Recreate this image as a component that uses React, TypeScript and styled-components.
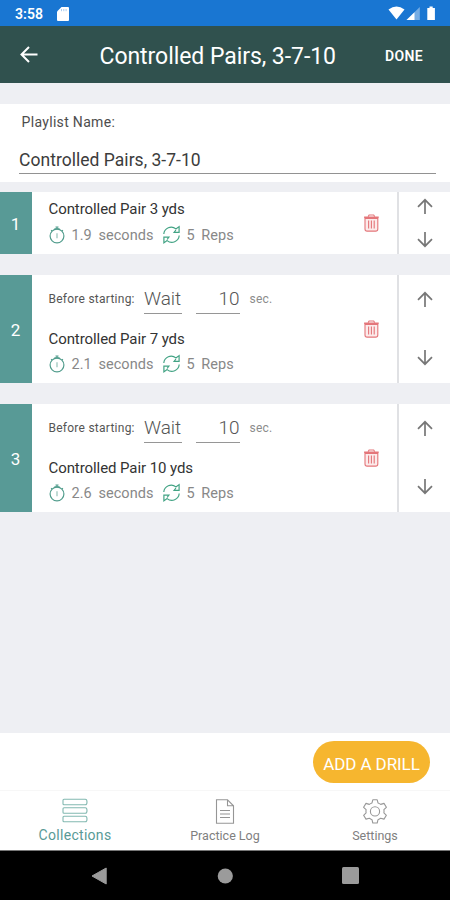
import React from "react";
import styled, { createGlobalStyle } from "styled-components";

const GlobalStyle = createGlobalStyle`
  * { box-sizing: border-box; }
  body { margin: 0; background: #eeeff3; }
  svg { display: block; flex: none; }
`;

const Screen = styled.div`
  width: 450px;
  height: 900px;
  display: flex;
  flex-direction: column;
  overflow: hidden;
  background: #eeeff3;
  font-family: Roboto, "Liberation Sans", sans-serif;
  color: #424242;
  white-space: nowrap;
`;

const StatusBar = styled.div`
  height: 26px;
  display: flex;
  align-items: center;
  padding: 1px 14px 0 15px;
  background: #1976d2;
  color: #fff;
`;

const Clock = styled.span`
  width: 42px;
  font-size: 14px;
  font-weight: 600;
  letter-spacing: 0.1px;
`;

const StatusIcons = styled.div`
  margin-left: auto;
  display: flex;
  align-items: center;
`;

const Header = styled.header`
  height: 57px;
  display: flex;
  align-items: center;
  padding: 2px 25px 0 20px;
  background: #30514e;
  color: #fff;
`;

const Title = styled.h1`
  margin: 0 0 0 61.5px;
  width: 285.5px;
  padding-top: 2px;
  font-size: 23px;
  font-weight: 400;
  line-height: 30px;
  letter-spacing: -0.06px;
`;

const Done = styled.button`
  padding: 0;
  border: 0;
  background: none;
  color: #fff;
  font: 600 14px/20px Roboto, sans-serif;
  letter-spacing: 0.35px;
`;

const NamePanel = styled.section`
  height: 78px;
  margin-top: 21px;
  padding: 8px 14px 0 19px;
  background: #fff;
`;

const FieldLabel = styled.div`
  padding-left: 2.5px;
  font-size: 14px;
  line-height: 20px;
  letter-spacing: 0.32px;
  color: #4d4d4d;
`;

const NameField = styled.div`
  height: 42px;
  padding-top: 17px;
  border-bottom: 1px solid #929292;
  font-size: 17.5px;
  line-height: 22px;
  letter-spacing: 0.03px;
  color: #3c3c3c;
`;

const Cards = styled.main`
  flex: 1;
  display: flex;
  flex-direction: column;
  gap: 21px;
  padding-top: 10px;
`;

const Card = styled.article<{ $compact: boolean }>`
  height: ${(p) => (p.$compact ? 62 : 108)}px;
  display: flex;
  background: #fff;
`;

const Index = styled.div`
  width: 32px;
  display: flex;
  align-items: center;
  justify-content: center;
  padding: 1px 1px 0 0;
  background: #589a96;
  color: #fff;
  font-size: 17px;
`;

const Details = styled.div`
  width: 313px;
  padding: 7px 0 0 16.5px;
`;

const WaitRow = styled.div`
  height: 46px;
  display: flex;
  padding-top: 1px;
`;

const Caption = styled.span<{ $width: number; $muted?: boolean }>`
  width: ${(p) => p.$width}px;
  padding-top: 5px;
  font-size: 12px;
  line-height: 22px;
  letter-spacing: 0.25px;
  color: ${(p) => (p.$muted ? "#8c8c8c" : "#555")};
`;

const WaitField = styled.span<{ $width: number; $right?: boolean }>`
  width: ${(p) => p.$width}px;
  height: 31px;
  margin-right: ${(p) => (p.$right ? 10 : 14)}px;
  padding-top: 5px;
  border-bottom: 1px solid #969696;
  font-size: 19px;
  font-weight: 300;
  line-height: 22px;
  letter-spacing: -0.1px;
  text-align: ${(p) => (p.$right ? "right" : "left")};
  color: #555;
`;

const DrillName = styled.div<{ $compact: boolean }>`
  height: 24px;
  padding-top: ${(p) => (p.$compact ? 0 : 1)}px;
  font-size: 15px;
  line-height: 21px;
  letter-spacing: -0.08px;
  color: #333;
`;

const Stats = styled.div`
  height: 24px;
  display: flex;
  align-items: center;
`;

const Stat = styled.span<{ $width: number }>`
  width: ${(p) => p.$width}px;
  padding: 2px 0 0 6px;
  font-size: 14.5px;
  line-height: 20px;
  letter-spacing: 0.05px;
  word-spacing: 3px;
  color: #888;
`;

const DeleteCell = styled.div`
  width: 54px;
  display: flex;
  align-items: center;
  justify-content: center;
  border-right: 2px solid #e0e1e4;
`;

const OrderCell = styled.div<{ $compact: boolean }>`
  flex: 1;
  display: flex;
  flex-direction: column;
  align-items: center;
  justify-content: space-between;
  padding: ${(p) => (p.$compact ? "6px 0" : "16px 0 17px")};
`;

const Footer = styled.div`
  height: 57px;
  display: flex;
  justify-content: flex-end;
  padding: 8px 20px 0 0;
  background: #fff;
`;

const AddButton = styled.button`
  width: 117px;
  height: 42px;
  padding: 4px 0 0;
  border: 0;
  border-radius: 21px;
  background: #f6b62f;
  color: #fff;
  font: 400 17px/24px Roboto, sans-serif;
  letter-spacing: -0.1px;
`;

const Tabs = styled.nav`
  height: 61px;
  display: grid;
  grid-template-columns: repeat(3, 1fr);
  border-top: 1px solid #f7f7f7;
  border-bottom: 1px solid #777;
  background: #fff;
`;

const Tab = styled.div<{ $active?: boolean }>`
  display: flex;
  flex-direction: column;
  align-items: center;
  gap: ${(p) => (p.$active ? 2 : 2.5)}px;
  padding-top: 7px;
  color: ${(p) => (p.$active ? "#589a96" : "#808080")};
  font-size: ${(p) => (p.$active ? 14 : 12.5)}px;
  line-height: 18px;
  letter-spacing: ${(p) => (p.$active ? 0.3 : 0)}px;
`;

const SystemNav = styled.div`
  height: 49px;
  display: grid;
  grid-template-columns: repeat(3, 125px);
  justify-content: center;
  align-items: center;
  justify-items: center;
  background: #000;
`;

const SdCard = () => (
  <svg width="12" height="14" viewBox="0 0 12 14">
    <path d="M4.5 0H11Q12 0 12 1V13Q12 14 11 14H1Q0 14 0 13V4.5Z" fill="#fff" />
    <path d="M4.5 2v2.2M6.8 2v2.2M9.1 2v2.2" stroke="#a9ccef" strokeWidth="1" />
  </svg>
);

const Signals = () => (
  <svg width="48" height="15" viewBox="0 0 48 15">
    <path d="M0.5 3.5Q8.5-2.5 16.5 3.5L8.5 13.5Z" fill="#fff" />
    <path d="M31.8 1v13H18.5Z" fill="#75ace4" />
    <path d="M26.5 6.2V14H18.5Z" fill="#fff" />
    <path d="M41.5 0.5h3.2v1.5h2.2v12h-7.6V2h2.2Z" fill="#fff" />
  </svg>
);

const BackArrow = () => (
  <svg width="18" height="19" viewBox="0 0 18 19" fill="none" stroke="#fff" strokeWidth="2">
    <path d="M17.5 8.5H2M9 1L1.5 8.5L9 16" />
  </svg>
);

const Stopwatch = () => (
  <svg width="17" height="20" viewBox="0 0 17 20" fill="none" stroke="#529d8d" strokeWidth="1.2">
    <circle cx="8" cy="11" r="6.9" />
    <path d="M6.5 2h3M8 1.5v2.6M5.4 3.8h5.2M2.1 5.2l1 1M13.9 5.2l-1 1" />
    <path d="M8 8.2v5" stroke="#b9d6d0" strokeWidth="1.8" />
  </svg>
);

const Repeat = () => (
  <svg width="18" height="20" viewBox="0 0 18 20" fill="none" stroke="#42a384" strokeWidth="1.2">
    <path d="M0.8 9A7.4 7.4 0 0 1 12.9 3.9L16.1 1.6V7.3H11.1L12.9 5" />
    <path d="M16.2 10.5A7.4 7.4 0 0 1 4.1 15.6L0.9 17.9V12.2H5.9L4.1 14.5" />
  </svg>
);

const Trash = () => (
  <svg width="16" height="19" viewBox="0 0 16 19" fill="none" stroke="#e4767a" strokeWidth="1.1">
    <path d="M2 4.4H14.8V15Q14.8 17.1 12.7 17.1H4.1Q2 17.1 2 15Z" fill="#fcebeb" />
    <path d="M1.1 3.3H15.7" strokeWidth="1.6" />
    <path d="M5.1 2.6L6.1 1H10.7L11.7 2.6" />
    <path d="M5.6 6.6v8M8.4 6.6v8M11.2 6.6v8" />
  </svg>
);

const Arrow = ({ down = false }: { down?: boolean }) => (
  <svg width="16" height="17" viewBox="0 0 16 17" fill="none" stroke="#777" strokeWidth="1.7">
    <path d={down ? "M8 1V15M1 8.2L8 15.2L15 8.2" : "M8 16V2M1 8.8L8 1.8L15 8.8"} />
  </svg>
);

const StackIcon = () => (
  <svg width="26" height="26" viewBox="0 0 26 26" fill="none" stroke="#83b9b1" strokeWidth="1.1">
    {[1.2, 9.7, 18.2].map((y) => (
      <path key={y} d={`M2 ${y}H23.3Q25 ${y} 25 ${y + 2.8}T23.3 ${y + 5.6}H2Q1 ${y + 5.6} 1 ${y + 4.6}V${y + 1}Q1 ${y} 2 ${y}Z`} />
    ))}
  </svg>
);

const LogIcon = () => (
  <svg width="20" height="26" viewBox="0 0 20 26" fill="none" stroke="#969696" strokeWidth="1.1">
    <path d="M1.5 1.8H12.5L18.5 7.8V25.2H1.5ZM12.5 1.8V7.8H18.5" />
    <path d="M5 12.5h10M5 16h10M5 19.5h10" />
  </svg>
);

const GearIcon = () => (
  <svg width="26" height="26" viewBox="0 0 26 26" fill="none" stroke="#989898" strokeWidth="1.1" strokeLinejoin="round">
    <path d="M10.8 1.8H15.2L16 4.9Q17.5 5.4 18.7 6.4L22 5.4L24.4 9.3L21.9 11.7Q22.2 13.2 21.9 14.8L24.4 17.3L22 21.1L18.7 20.2Q17.5 21.2 16 21.7L15.2 25H10.8L10 21.7Q8.5 21.2 7.3 20.2L4 21.1L1.6 17.3L4.1 14.8Q3.8 13.2 4.1 11.7L1.6 9.3L4 5.4L7.3 6.4Q8.5 5.4 10 4.9Z" />
    <circle cx="13" cy="13.4" r="4.6" />
  </svg>
);

const drills = [
  { name: "Controlled Pair 3 yds", time: "1.9", wait: null },
  { name: "Controlled Pair 7 yds", time: "2.1", wait: 10 },
  { name: "Controlled Pair 10 yds", time: "2.6", wait: 10 },
];

export default function App() {
  return (
    <Screen>
      <GlobalStyle />
      <StatusBar>
        <Clock>3:58</Clock>
        <SdCard />
        <StatusIcons><Signals /></StatusIcons>
      </StatusBar>
      <Header>
        <BackArrow />
        <Title>Controlled Pairs, 3-7-10</Title>
        <Done>DONE</Done>
      </Header>
      <NamePanel>
        <FieldLabel>Playlist Name:</FieldLabel>
        <NameField>Controlled Pairs, 3-7-10</NameField>
      </NamePanel>
      <Cards>
        {drills.map((drill, i) => {
          const compact = drill.wait === null;
          return (
            <Card key={drill.name} $compact={compact}>
              <Index>{i + 1}</Index>
              <Details>
                {!compact && (
                  <WaitRow>
                    <Caption $width={95.5}>Before starting:</Caption>
                    <WaitField $width={37.5}>Wait</WaitField>
                    <WaitField $width={44} $right>{drill.wait}</WaitField>
                    <Caption $width={30} $muted>sec.</Caption>
                  </WaitRow>
                )}
                <DrillName $compact={compact}>{drill.name}</DrillName>
                <Stats>
                  <Stopwatch />
                  <Stat $width={97}>{drill.time} seconds</Stat>
                  <Repeat />
                  <Stat $width={60}>5 Reps</Stat>
                </Stats>
              </Details>
              <DeleteCell><Trash /></DeleteCell>
              <OrderCell $compact={compact}>
                <Arrow />
                <Arrow down />
              </OrderCell>
            </Card>
          );
        })}
      </Cards>
      <Footer><AddButton>ADD A DRILL</AddButton></Footer>
      <Tabs>
        <Tab $active><StackIcon />Collections</Tab>
        <Tab><LogIcon />Practice Log</Tab>
        <Tab><GearIcon />Settings</Tab>
      </Tabs>
      <SystemNav>
        <svg width="18" height="18" viewBox="0 0 18 18"><path d="M1 9L15.2 1V17Z" fill="#9b9b9b" stroke="#9b9b9b" strokeLinejoin="round" /></svg>
        <svg width="16" height="16" viewBox="0 0 16 16"><circle cx="8.3" cy="8" r="7.6" fill="#9b9b9b" /></svg>
        <svg width="17" height="17" viewBox="0 0 17 17"><rect width="17" height="17" rx="1.5" fill="#9b9b9b" /></svg>
      </SystemNav>
    </Screen>
  );
}
